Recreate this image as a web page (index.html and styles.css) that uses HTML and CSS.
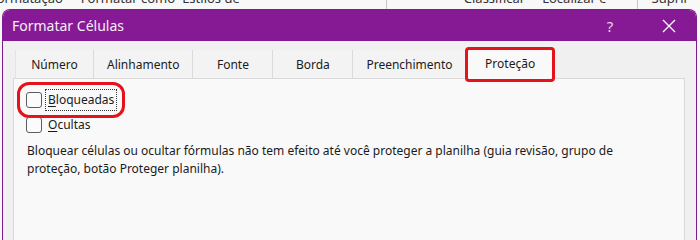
FILE: index.html
```html
<!DOCTYPE html>
<html lang="pt-BR">
<head>
<meta charset="utf-8">
<title>Formatar Células</title>
<link rel="stylesheet" href="styles.css">
</head>
<body>
<div class="desk">
  <div class="ribbon">
    <span class="rb rb-a">Formatação</span>
    <span class="rb rb-b">Formatar como</span>
    <span class="rb rb-c">Estilos de</span>
    <span class="rb-sep rb-s1"></span>
    <span class="rb rb-d">Classificar</span>
    <span class="rb rb-e">Localizar e</span>
    <span class="rb-sep rb-s2"></span>
    <span class="rb rb-f">Suprir</span>
  </div>
  <div class="dialog">
    <div class="titlebar">
      <span class="title">Formatar Células</span>
      <span class="tb-btn help">?</span>
      <span class="tb-btn close">
        <svg width="14" height="14" viewBox="0 0 14 14"><path d="M1 1 L13 13 M13 1 L1 13" stroke="#fff" stroke-width="1.3" fill="none"/></svg>
      </span>
    </div>
    <div class="body">
      <div class="tabs">
        <div class="tab">Número</div>
        <div class="tab">Alinhamento</div>
        <div class="tab">Fonte</div>
        <div class="tab">Borda</div>
        <div class="tab">Preenchimento</div>
        <div class="tab tab-active mark">Proteção</div>
      </div>
      <div class="panel">
        <div class="check-row"><span class="mark-box"><span class="box"></span><span class="label focus"><u>B</u>loqueadas</span></span></div>
        <div class="check-row"><span class="box"></span><span class="label"><u>O</u>cultas</span></div>
        <p class="note">Bloquear células ou ocultar fórmulas não tem efeito até você proteger a planilha (guia revisão, grupo de proteção, botão Proteger planilha).</p>
      </div>
    </div>
  </div>
</div>
</body>
</html>
```

FILE: styles.css
```css
* { box-sizing: border-box; }
html, body {
  margin: 0;
  padding: 0;
  overflow: hidden;
  background: #f7f7f7;
  font-family: "Noto Sans", "Open Sans", "Liberation Sans", sans-serif;
}
.desk {
  width: 700px;
  height: 100vh;
  min-height: 222px;
  overflow: hidden;
  background: #f7f7f7;
  display: flex;
  flex-direction: column;
}
.ribbon {
  height: 9px;
  flex: none;
  display: flex;
  align-items: flex-end;
  overflow: hidden;
  background: #f8f8f8;
  color: #333;
  font-size: 13px;
  line-height: 13px;
  white-space: nowrap;
}
.rb { display: block; margin-bottom: 4px; }
.rb-a { margin-left: -10px; }
.rb-b { margin-left: 18px; }
.rb-c { margin-left: 7px; }
.rb-sep { width: 1px; height: 9px; background: #c8c8c8; align-self: flex-start; }
.rb-s1 { margin-left: 146px; }
.rb-d { margin-left: 77px; }
.rb-e { margin-left: 17px; }
.rb-s2 { margin-left: 30px; }
.rb-f { margin-left: 14px; }

.dialog {
  flex: 1;
  margin: 0 3px 0 2px;
  border: 1px solid #7d1d8b;
  border-bottom: none;
  border-radius: 8px 8px 0 0;
  background: #f0f0f0;
  overflow: hidden;
  display: flex;
  flex-direction: column;
}
.titlebar {
  height: 31px;
  flex: none;
  background: #861a94;
  display: flex;
  align-items: center;
  padding: 0 6px 0 9px;
  color: #fff;
}
.title {
  flex: 1;
  font-size: 14px;
  color: #f6eef8;
}
.tb-btn {
  width: 46px;
  display: flex;
  justify-content: center;
  align-items: center;
  color: #e9d4ee;
}
.help { font-size: 15px; margin-right: 13px; padding-left: 4px; }
.close { padding-left: 4px; }
.close svg { display: block; }

.body {
  flex: 1;
  display: flex;
  flex-direction: column;
  padding: 9px 11px 0 10px;
}
.tabs {
  display: flex;
  padding-left: 2px;
  height: 28px;
  flex: none;
  align-items: stretch;
}
.tab {
  min-width: 80px;
  padding: 1px 13px 0;
  display: flex;
  align-items: center;
  justify-content: center;
  font-size: 12px;
  color: #1b1b1b;
  background: #f3f3f3;
  border-left: 1px solid #dadada;
}
.tab:first-child { border-left: 1px solid #e4e4e4; min-width: 78px; }
.tab:nth-child(2) { min-width: 99px; }
.tab:nth-child(5) { min-width: 110px; }
.tab-active {
  position: relative;
  background: #f9f9f9;
  min-width: 86px;
  margin: -1px 1px -2px 1px;
  padding-bottom: 4px;
  z-index: 1;
}
.mark {
  outline: 3px solid #e5121b;
  outline-offset: -1px;
  border-radius: 2px;
}
.panel {
  flex: 1;
  border: 1px solid #d9d9d9;
  border-bottom: none;
  background: #f9f9f9;
  padding: 13px 13px 0 12px;
}
.check-row {
  display: flex;
  align-items: center;
  height: 16px;
  margin-bottom: 9px;
  font-size: 12px;
  color: #1b1b1b;
}
.mark-box {
  display: flex;
  align-items: center;
  border-radius: 3px;
  outline: 3px solid #e5121b;
  outline-offset: 6px;
  padding-right: 1px;
}
.box {
  width: 16px;
  height: 16px;
  border: 1px solid #5c5c5c;
  border-radius: 3px;
  background: #fbfbfb;
  margin-right: 6px;
  flex: none;
}
.label { line-height: 18px; }
.label u { text-underline-offset: 2px; }
.focus {
  outline: 1px dotted #333;
  outline-offset: 1px;
  padding: 0 1px;
  margin-left: -1px;
}
.note {
  margin: 8px 0 0 1px;
  font-size: 12px;
  line-height: 18px;
  color: #1b1b1b;
  max-width: 630px;
}
```
